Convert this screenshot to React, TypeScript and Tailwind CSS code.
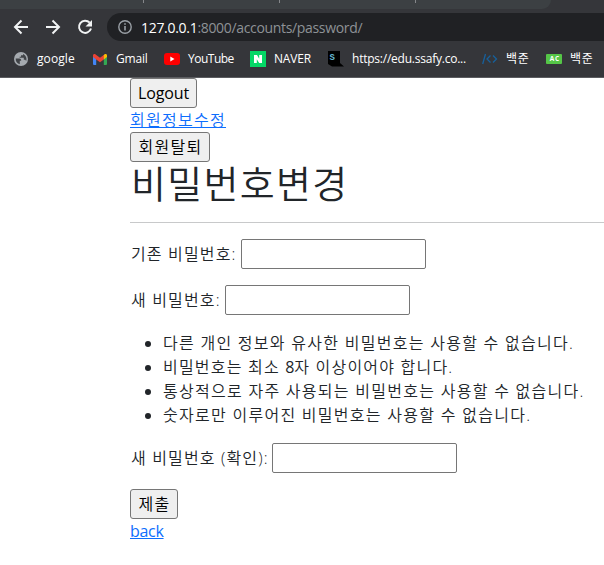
import type { ReactNode } from 'react';

function Bookmark({ icon, className, children }: { icon: ReactNode; className: string; children: ReactNode }) {
  return (
    <div className={`flex h-full shrink-0 items-center whitespace-nowrap ${className}`}>
      <span className="mr-2 flex w-4 shrink-0 justify-center">{icon}</span>
      <span>{children}</span>
    </div>
  );
}

function BrowserBar() {
  return (
    <header className="h-[78px] border-b border-[#5b5c60] bg-[#35363a] text-white">
      <div className="flex h-[9px] w-[551px] rounded-br-[9px] bg-[#3c4043]">
        <span className="ml-[143px] h-[3px] w-px bg-[#85878a]" />
        <span className="ml-[135px] h-[3px] w-px bg-[#85878a]" />
        <span className="ml-[135px] h-[3px] w-px bg-[#85878a]" />
      </div>
      <div className="flex h-9 items-center">
        <svg width="107" height="36" viewBox="0 0 107 36" fill="none" stroke="#f1f3f4" strokeWidth="2">
          <path d="M28 18H15M21.5 11.5 15 18l6.500 6.500" />
          <path d="M46 18h13M52.500 11.500 59 18l-6.500 6.500" />
          <path d="M89.700 13.700A6.100 6.100 0 1 0 91 19.500" />
          <path d="M92 11v6.500h-6.500z" fill="#f1f3f4" stroke="none" />
        </svg>
        <div className="flex h-7 flex-1 items-center rounded-l-full bg-[#202124] pl-[11px]">
          <svg width="14" height="14" viewBox="0 0 14 14" fill="none" stroke="#9aa0a6" strokeWidth="1.4">
            <circle cx="7" cy="7" r="6.200" />
            <path d="M7 6v4.500M7 3.300v1.500" strokeWidth="1.600" />
          </svg>
          <span className="ml-[9px] whitespace-nowrap font-['Open_Sans','Noto_Sans',sans-serif] text-[14px] tracking-[-0.33px] text-[#8e9296]">
            <span className="tracking-[-0.3px] text-white">127.0.0.1</span>:8000/accounts/password/
          </span>
        </div>
      </div>
      <nav className="flex h-7 font-['Open_Sans','Noto_Sans_CJK_KR',sans-serif] text-[12px]">
        <Bookmark className="w-[79px] ml-[13px] tracking-[0.1px]" icon={
          <svg width="14" height="14" viewBox="0 0 14 14">
            <circle cx="7" cy="7" r="7" fill="#a5aaaf" />
            <path d="M1.700 6.500h3.600c1.500 0 1.900 1 1.900 2.200H5.800v3.500C3.200 11.700 1.500 9.600 1.700 6.500M9 2.100v1.200H7v1.400H5.600v1h4.200v2h1.400l1 1.300c.9-2.700-.3-5.700-3.200-6.900" fill="#404347" />
          </svg>
        }>google</Bookmark>
        <Bookmark className="w-[72px] tracking-[-0.2px]" icon={
          <svg width="14" height="11" viewBox="0 0 14 11">
            <path d="M0 1.500 3.200 3.800V11H1a1 1 0 0 1-1-1z" fill="#4285f4" />
            <path d="M14 1.500 10.800 3.800V11H13a1 1 0 0 0 1-1z" fill="#34a853" />
            <path d="M0 1.500C0 .2 1.500-.4 2.600.5L7 3.800 11.400.5l-.6 5L7 8.300 3.200 5.500 0 3z" fill="#ea4335" />
            <path d="M10.800 1 11.400.5C12.500-.4 14 .2 14 1.500V3l-3.200 2.500z" fill="#fbbc04" />
          </svg>
        }>Gmail</Bookmark>
        <Bookmark className="w-[86px] tracking-[-0.5px]" icon={
          <svg width="16" height="12" viewBox="0 0 16 12">
            <rect width="16" height="12" rx="3" fill="#f00" />
            <path d="m6.300 3.500 4.200 2.500-4.200 2.500z" fill="#fff" />
          </svg>
        }>YouTube</Bookmark>
        <Bookmark className="w-[78px] tracking-[-0.2px]" icon={
          <svg width="16" height="16" viewBox="0 0 16 16">
            <rect width="16" height="16" fill="#05d766" />
            <path d="M4 12V4h3l2.200 3.700V4H12v8H9.200L6.800 8.300V12z" fill="#fff" />
          </svg>
        }>NAVER</Bookmark>
        <Bookmark className="w-[154px] tracking-[-0.23px]" icon={
          <svg width="16" height="16" viewBox="0 0 16 16">
            <path d="M0 0h12v12l4 3.500H4L0 13z" fill="#000" />
            <text x="1.500" y="9" fill="#67b9d3" fontSize="9" fontWeight="700" fontFamily="Liberation Mono, monospace">S</text>
          </svg>
        }>https://edu.ssafy.co...</Bookmark>
        <Bookmark className="w-16 tracking-[0.8px]" icon={
          <svg width="16" height="12" viewBox="0 0 16 12" fill="none" stroke="#17609b" strokeWidth="1.300">
            <path d="M3.500 1 .7 11M8.500 2.500 5 6l3.500 3.500M11 2.500 14.500 6 11 9.500" />
          </svg>
        }>백준</Bookmark>
        <Bookmark className="w-[58px] tracking-[0.8px]" icon={
          <svg width="16" height="10" viewBox="0 0 16 10">
            <rect width="16" height="10" rx="1" fill="#55c647" />
            <text x="3.700" y="7.300" fill="#fff" fontSize="6.500" fontWeight="700" fontFamily="Open Sans, sans-serif">AC</text>
          </svg>
        }>백준</Bookmark>
      </nav>
    </header>
  );
}

const button = 'flex h-[30px] items-center justify-center rounded-[3px] border border-[#767676] bg-[#efefef] text-black';

function Field({ label, className }: { label: string; className: string }) {
  return (
    <label className="mb-4 flex h-[30px] items-center whitespace-nowrap">
      <span className={`shrink-0 pl-px tracking-[1.15px] ${className}`}>{label}</span>
      <input type="password" className="h-[30px] w-[185px] rounded-[2px] border border-[#767676] bg-white" />
    </label>
  );
}

export default function App() {
  return (
    <div className="h-[565px] w-[604px] overflow-hidden bg-white">
      <BrowserBar />
      <main className="ml-[130px] font-['Open_Sans','Noto_Sans_CJK_KR',sans-serif] text-[16px] font-[350] leading-6 text-[#212529]">
        <button className={`${button} w-[67px] font-normal tracking-[-0.15px]`}>Logout</button>
        <a href="#" className="block w-24 whitespace-nowrap tracking-[1.28px] text-[#0d6efd] underline">회원정보수정</a>
        <button className={`${button} w-20 pl-px tracking-[1.28px]`}>회원탈퇴</button>
        <h1 className="h-11 whitespace-nowrap pl-px text-[38px] font-[350] leading-[42px] tracking-[1.3px]">비밀번호변경</h1>
        <hr className="mt-4 mb-4 h-px border-0 bg-[#c8c9ca]" />
        <Field label="기존 비밀번호:" className="w-[111px]" />
        <Field label="새 비밀번호:" className="w-[95px]" />
        <ul className="mb-4 list-disc whitespace-nowrap pl-[33px] tracking-[1.28px]">
          <li>다른 개인 정보와 유사한 비밀번호는 사용할 수 없습니다.</li>
          <li className="tracking-[1.2px]">비밀번호는 최소 <span className="font-normal tracking-normal">8</span>자 이상이어야 합니다.</li>
          <li>통상적으로 자주 사용되는 비밀번호는 사용할 수 없습니다.</li>
          <li>숫자로만 이루어진 비밀번호는 사용할 수 없습니다.</li>
        </ul>
        <Field label="새 비밀번호 (확인):" className="w-[142px]" />
        <button className={`${button} w-12 pl-px tracking-[1.28px]`}>제출</button>
        <a href="#" className="block w-fit font-normal tracking-[-0.3px] text-[#0d6efd] underline">back</a>
      </main>
    </div>
  );
}
